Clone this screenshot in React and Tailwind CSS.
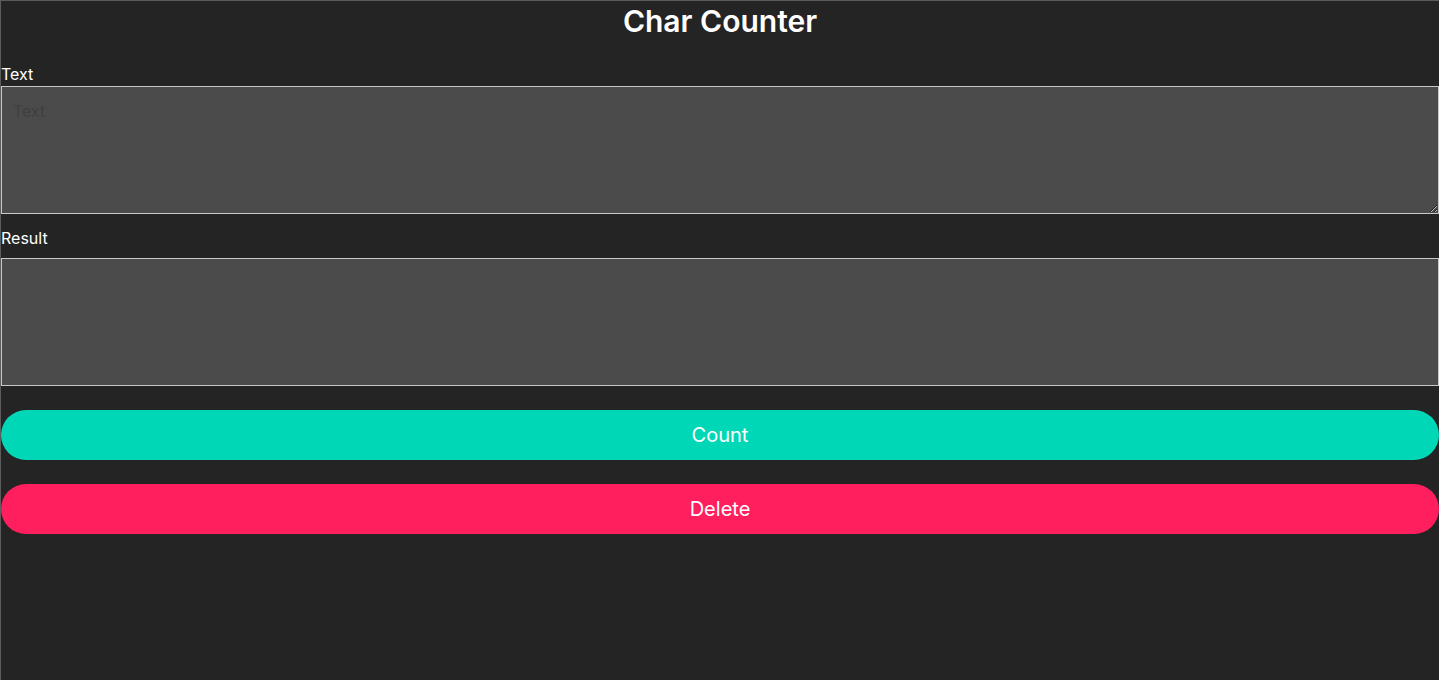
export default function App() {
  return (
    <div
      className="min-h-[680px] w-full bg-[#242424] border-t border-l border-[#5c5c5c] text-white"
      style={{ fontFamily: "Inter, 'Noto Sans', sans-serif" }}
    >
      <h1 className="text-center text-[30px] font-semibold leading-[40px] pt-[0px]">Char Counter</h1>
      <div className="mt-[21px] text-[16px] leading-[24px]">Text</div>
      <textarea
        placeholder="Text"
        className="block w-full h-[128px] bg-[#4b4b4b] border border-[#c8c8c8] px-[11px] py-[12px] text-[16px] text-white placeholder:text-[#3f3f3f] outline-none"
      />
      <div className="mt-[12px] text-[16px] leading-[24px]">Result</div>
      <textarea
        readOnly
        className="block mt-[8px] w-full h-[128px] bg-[#4b4b4b] border border-[#c8c8c8] px-[11px] py-[12px] text-[16px] text-white outline-none resize-none"
      />
      <button className="block mt-[24px] w-full h-[50px] rounded-full bg-[#00d7b6] text-white text-[20px]">
        Count
      </button>
      <button className="block mt-[24px] w-full h-[50px] rounded-full bg-[#ff1f5e] text-white text-[20px]">
        Delete
      </button>
    </div>
  );
}
